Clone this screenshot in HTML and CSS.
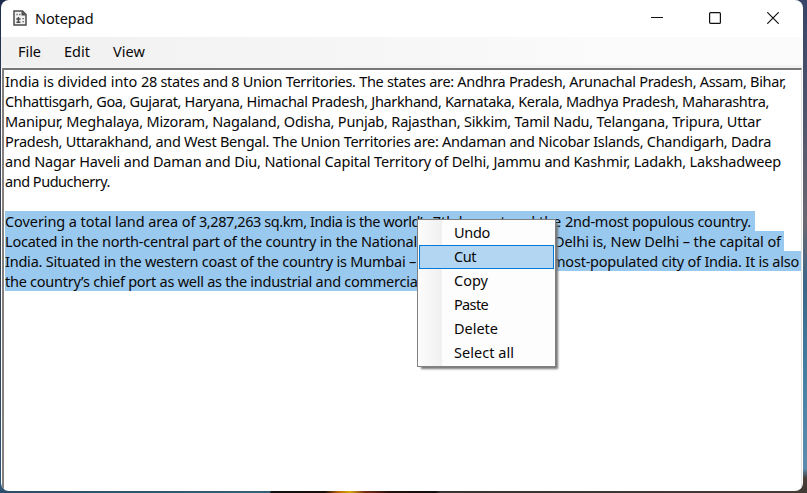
FILE: index.html
```html
<!DOCTYPE html>
<html lang="en">
<head>
<meta charset="utf-8">
<title>Notepad</title>
<link rel="stylesheet" href="styles.css">
</head>
<body>
<div class="window">
  <header class="titlebar">
    <svg class="app-icon" viewBox="0 0 14 16" width="14" height="16">
      <path d="M1 1h8.5L13 4.5V15H1z" fill="#f2f2f2" stroke="#4b4b4b" stroke-width="1.5"/>
      <path d="M8.5 1v4.5H13z" fill="#4b4b4b"/>
      <path d="M3.3 4.5h1.5M6 4.5h1.5M9.3 8.7h1.8M9.3 11.7h1.8" stroke="#777" stroke-width="1.3"/>
      <path d="M5.4 7v5M3.2 9h4.4M3.4 12.2h4" stroke="#4b4b4b" stroke-width="1.5"/>
    </svg>
    <h1 class="title"><span data-width="58.5">Notepad</span></h1>
    <div class="controls">
      <svg width="12" height="12" viewBox="0 0 12 12"><path d="M0 5.5h12" stroke="#111"/></svg>
      <svg width="12" height="12" viewBox="0 0 12 12"><rect x=".6" y=".6" width="10.8" height="10.8" rx="1" fill="none" stroke="#111" stroke-width="1.2"/></svg>
      <svg width="12" height="12" viewBox="0 0 12 12"><path d="M.3.3l11.4 11.4M11.7.3L.3 11.7" stroke="#111" stroke-width="1.2"/></svg>
    </div>
  </header>
  <nav class="menubar"><span data-width="23">File</span><span data-width="26">Edit</span><span data-width="32">View</span></nav>
  <main class="editor">
    <p class="para">
      <span class="line"><span data-width="136">India is divided into&nbsp;</span><span data-width="645">28 states and 8 Union Territories. The states are: Andhra Pradesh, Arunachal Pradesh, Assam, Bihar,</span></span>
      <span class="line"><span data-width="764">Chhattisgarh, Goa, Gujarat, Haryana, Himachal Pradesh, Jharkhand, Karnataka, Kerala, Madhya Pradesh, Maharashtra,</span></span>
      <span class="line"><span data-width="756">Manipur, Meghalaya, Mizoram, Nagaland, Odisha, Punjab, Rajasthan, Sikkim, Tamil Nadu, Telangana, Tripura, Uttar</span></span>
      <span class="line"><span data-width="766">Pradesh, Uttarakhand, and West Bengal. The Union Territories are: Andaman and Nicobar Islands, Chandigarh, Dadra</span></span>
      <span class="line"><span data-width="776">and Nagar Haveli and Daman and Diu, National Capital Territory of Delhi, Jammu and Kashmir, Ladakh, Lakshadweep</span></span>
      <span class="line"><span data-width="105">and Puducherry.</span></span>
    </p>
    <p class="para">
      <span class="line selected first"><span data-width="194">Covering a total land area of&nbsp;</span><span data-width="111">3,287,263 sq.km,&nbsp;</span><span data-width="110">India is the world</span><span data-width="145">’s 7th largest and the&nbsp;</span><span data-width="186">2nd-most populous country.</span></span>
      <span class="line selected second"><span data-width="412">Located in the north-central part of the country in the National</span><span data-width="137">&nbsp;Capital Territory of&nbsp;</span><span data-width="227">Delhi is, New Delhi – the capital of</span></span>
      <span class="line selected third"><span data-width="411">India. Situated in the western coast of the country is Mumbai –</span><span data-width="136">&nbsp;which is also the&nbsp;</span><span data-width="247">most-populated city of India. It is also</span></span>
      <span class="line selected fourth"><span data-width="416">the country’s chief port as well as the industrial and commercial</span></span>
    </p>
  </main>
  <ul class="context-menu">
    <li><span data-width="36">Undo</span></li>
    <li class="active"><span data-width="22">Cut</span></li>
    <li><span data-width="34">Copy</span></li>
    <li><span data-width="34">Paste</span></li>
    <li><span data-width="44">Delete</span></li>
    <li><span data-width="60">Select all</span></li>
  </ul>
</div>
<script src="script.js"></script>
</body>
</html>
```
FILE: styles.css
```css
* { box-sizing: border-box; }
body {
  margin: 0;
  width: 807px;
  height: 493px;
  overflow: hidden;
  padding: 0 4px 2px 1px;
  font: 14.5px/20px "Noto Sans", "Open Sans", sans-serif;
  color: #080808;
  background:
    linear-gradient(90deg, #2b4d69 0, #335f77 270px, #111 271px, #180e09 325px, #b86508 338px, #d6a90b 350px, #762c13 365px, #24110e 390px, #120e0c 435px, #393431 440px, #433b36 100%) 0 100% / 100% 3px no-repeat,
    linear-gradient(#1b2b4c 0, #3c465d 30%, #34414e 50%, #2f4660 80%, #2c567a 100%) 0 0 / 10px 100% no-repeat,
    linear-gradient(#374568 0, #4c526b 20%, #6a6871 45%, #3c6687 58%, #437fa1 75%, #5e8cae 95%, #4a403b 97%, #3e3530 100%) 100% 0 / 12px 100% no-repeat;
}
.window {
  position: relative;
  display: flex;
  flex-direction: column;
  width: 802px;
  height: 491px;
  border-radius: 8px;
  overflow: hidden;
  background: #fff;
}
.titlebar { display: flex; align-items: center; height: 37px; padding: 0 0 1px 12px; }
.app-icon { margin-right: 8px; }
.title { margin: 0; font-size: 14.5px; font-weight: 400; }
.controls { display: flex; gap: 46px; margin: 0 24px 0 auto; }
.controls svg { display: block; }
.menubar {
  display: flex;
  gap: 23px;
  height: 31px;
  padding: 4px 17px 0;
  background: linear-gradient(90deg, #f0f0f0, #fbfbfb 80%, #fbfbfb);
  border-bottom: 3px solid #f3f3f3;
}
.editor {
  flex: 1;
  margin: 0 1px;
  border: solid;
  border-width: 2px 1px 0 2px;
  border-color: #777 #e2e2e2 #fff #858080;
  overflow: hidden;
}
.para { margin: 0 0 20px; padding-top: 1px; }
.para + .para { padding: 0; }
.line { display: block; width: max-content; padding-left: 1px; height: 20px; white-space: nowrap; }
.selected { margin-left: 1px; padding-left: 0; background: #9ac9ef; }
.first { width: 750px; }
.second { width: 779px; }
.third { width: 796px; }
.fourth { width: 416px; }
[data-width] { display: inline-block; white-space: nowrap; }
.context-menu {
  position: absolute;
  left: 416px;
  top: 219px;
  width: 139px;
  height: 148px;
  margin: 0;
  padding: 1px;
  list-style: none;
  border: 1px solid #808080;
  background: linear-gradient(90deg, #fcfcfc 0, #f0f0f0 24px, #fdfdfd 24px);
  box-shadow: 3px 3px 2px -1px #777;
}
.context-menu li { height: 24px; padding: 0 0 0 34px; border: 1px solid transparent; }
.context-menu .active { border-color: #0078d7; background: #b3d7f3; }
```
FILE: script.js
```js
// Track each text run so that it fills its declared width.
document.querySelectorAll("[data-width]").forEach((run) => {
  const target = Number(run.dataset.width);
  const natural = run.getBoundingClientRect().width;
  run.style.letterSpacing = (target - natural) / run.textContent.length + "px";
});
```
